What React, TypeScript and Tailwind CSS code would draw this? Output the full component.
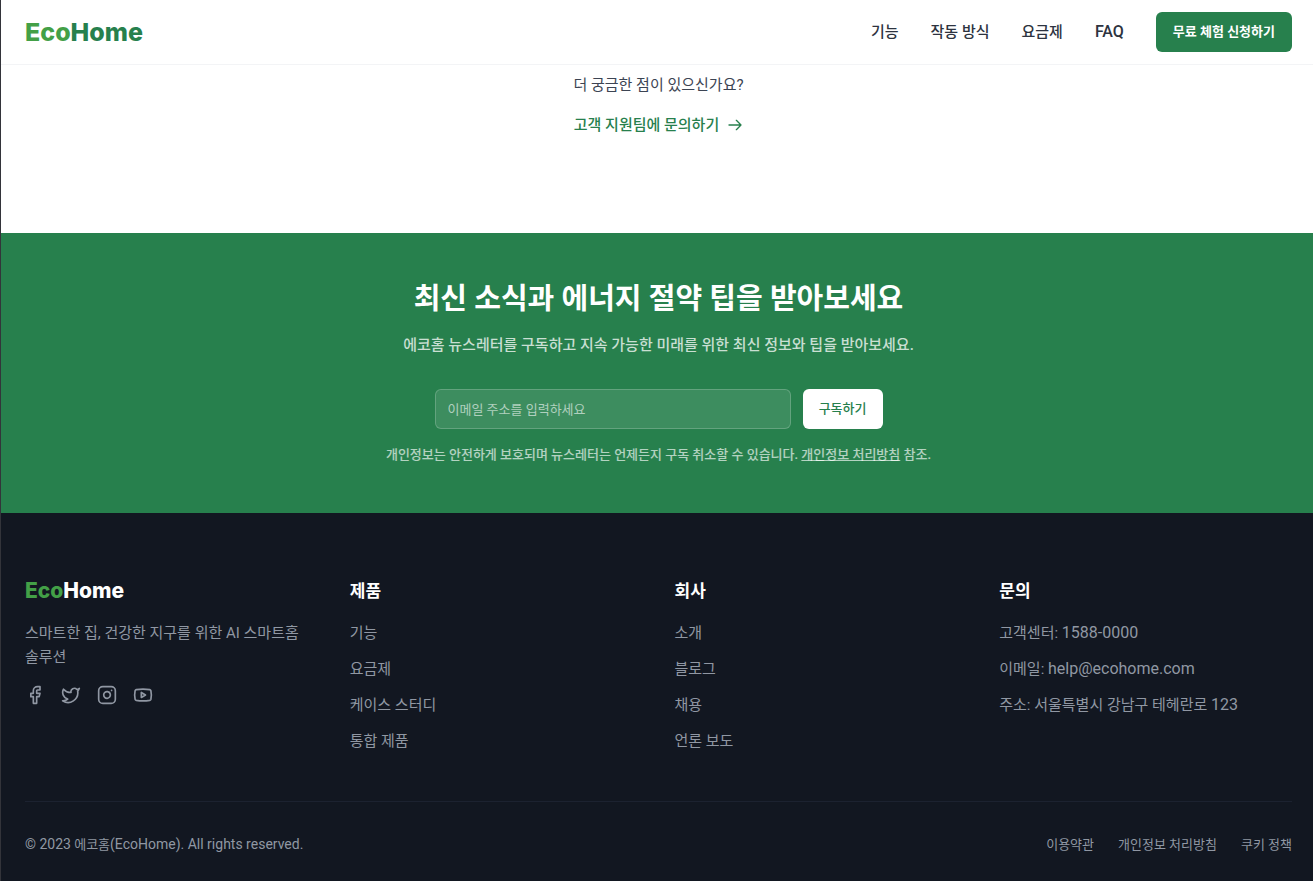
import { Facebook, Twitter, Instagram, Youtube } from 'lucide-react';

const navLinks = ['기능', '작동 방식', '요금제'];
const columns = [
  { title: '제품', links: ['기능', '요금제', '케이스 스터디', '통합 제품'] },
  { title: '회사', links: ['소개', '블로그', '채용', '언론 보도'] },
];
const socials = [
  { name: 'Facebook', Icon: Facebook },
  { name: 'Twitter', Icon: Twitter },
  { name: 'Instagram', Icon: Instagram },
  { name: 'YouTube', Icon: Youtube },
];

function Header() {
  return (
    <header className="sticky top-0 z-10 border-b border-gray-100 bg-white pl-6 pr-[21px]">
      <div className="flex h-16 items-center justify-between">
        <a href="#home" className="font-[Inter,sans-serif] text-[25px] font-extrabold leading-8 text-[#27804d]">
          <span className="text-[#43a047]">Eco</span>Home
        </a>
        <nav className="flex items-center gap-8 font-medium text-[#2d3340]">
          {navLinks.map((label) => (
            <a key={label} href="#section">{label}</a>
          ))}
          <a href="#faq" className="text-base">FAQ</a>
          <button type="button" className="h-10 rounded-md bg-[#27804d] px-[17px] text-[13px] font-bold text-white">
            무료 체험 신청하기
          </button>
        </nav>
      </div>
    </header>
  );
}

function Newsletter() {
  return (
    <section className="bg-[#27804d] pb-12 pl-[27px] pr-6 pt-12 text-center text-white">
      <h2 className="text-[29px] font-bold leading-9">최신 소식과 에너지 절약 팁을 받아보세요</h2>
      <p className="mt-4 font-medium leading-6 text-white/75">
        에코홈 뉴스레터를 구독하고 지속 가능한 미래를 위한 최신 정보와 팁을 받아보세요.
      </p>
      <form className="mx-auto mt-8 flex max-w-[448px] gap-3 text-[13px]" onSubmit={(e) => e.preventDefault()}>
        <input
          type="email"
          aria-label="이메일 주소"
          placeholder="이메일 주소를 입력하세요"
          className="h-10 min-w-0 flex-1 rounded-md border border-white/20 bg-white/10 px-3 text-white placeholder:text-white/60"
        />
        <button type="submit" className="h-10 rounded-md bg-white px-4 font-medium text-[#27804d]">구독하기</button>
      </form>
      <p className="mt-4 text-[13px] font-medium leading-5 text-white/65">
        개인정보는 안전하게 보호되며 뉴스레터는 언제든지 구독 취소할 수 있습니다.{' '}
        <a href="#privacy" className="underline">개인정보 처리방침</a> 참조.
      </p>
    </section>
  );
}

function Footer() {
  return (
    <footer className="bg-[#121721] pb-6 pl-6 pr-[21px] pt-16 leading-6 text-[#9097a3]">
      <div className="grid grid-cols-4 gap-8 pb-12">
        <div>
          <a href="#home" className="block font-[Inter,sans-serif] text-[21px] font-extrabold leading-7 text-white">
            <span className="text-[#43a047]">Eco</span>Home
          </a>
          <p className="mt-4 break-keep">스마트한 집, 건강한 지구를 위한 AI 스마트홈 솔루션</p>
          <div className="mt-4 flex gap-4">
            {socials.map(({ name, Icon }) => (
              <a key={name} href="#social" aria-label={name}><Icon size={20} /></a>
            ))}
          </div>
        </div>
        {columns.map(({ title, links }) => (
          <div key={title}>
            <h3 className="text-[17px] font-bold leading-7 text-white">{title}</h3>
            <ul className="mt-4 space-y-3">
              {links.map((label) => (
                <li key={label}><a href="#page">{label}</a></li>
              ))}
            </ul>
          </div>
        ))}
        <div>
          <h3 className="text-[17px] font-bold leading-7 text-white">문의</h3>
          <ul className="mt-4 space-y-3">
            <li>고객센터: <span className="text-base">1588-0000</span></li>
            <li>이메일: <span className="text-base">help@ecohome.com</span></li>
            <li>주소: 서울특별시 강남구 테헤란로 <span className="text-base">123</span></li>
          </ul>
        </div>
      </div>
      <div className="flex items-center justify-between border-t border-[#1c2230] pt-8 text-[13px] leading-5">
        <p><span className="text-sm">© 2023</span> 에코홈<span className="text-sm">(EcoHome). All rights reserved.</span></p>
        <div className="flex gap-6">
          <a href="#terms">이용약관</a>
          <a href="#privacy">개인정보 처리방침</a>
          <a href="#cookies">쿠키 정책</a>
        </div>
      </div>
    </footer>
  );
}

export default function App() {
  return (
    <div className="min-h-screen border-l border-[#33343a] bg-[#121721] font-[Roboto,'Noto_Sans_CJK_KR',sans-serif] text-[15px]">
      <Header />
      <main>
        <section className="bg-white pb-24 pl-[27px] pr-6 pt-2 text-center leading-6">
          <p className="text-[#3c4453]">더 궁금한 점이 있으신가요?</p>
          <a href="#contact" className="mt-4 inline-flex items-center gap-2 font-medium text-[#27804d]">
            고객 지원팀에 문의하기
            <svg
              className="size-4"
              viewBox="0 0 24 24"
              fill="none"
              stroke="currentColor"
              strokeWidth="2"
              strokeLinecap="round"
              strokeLinejoin="round"
              aria-hidden="true"
            >
              <path d="M14 5l7 7m0 0l-7 7m7-7H3" />
            </svg>
          </a>
        </section>
        <Newsletter />
      </main>
      <Footer />
    </div>
  );
}
